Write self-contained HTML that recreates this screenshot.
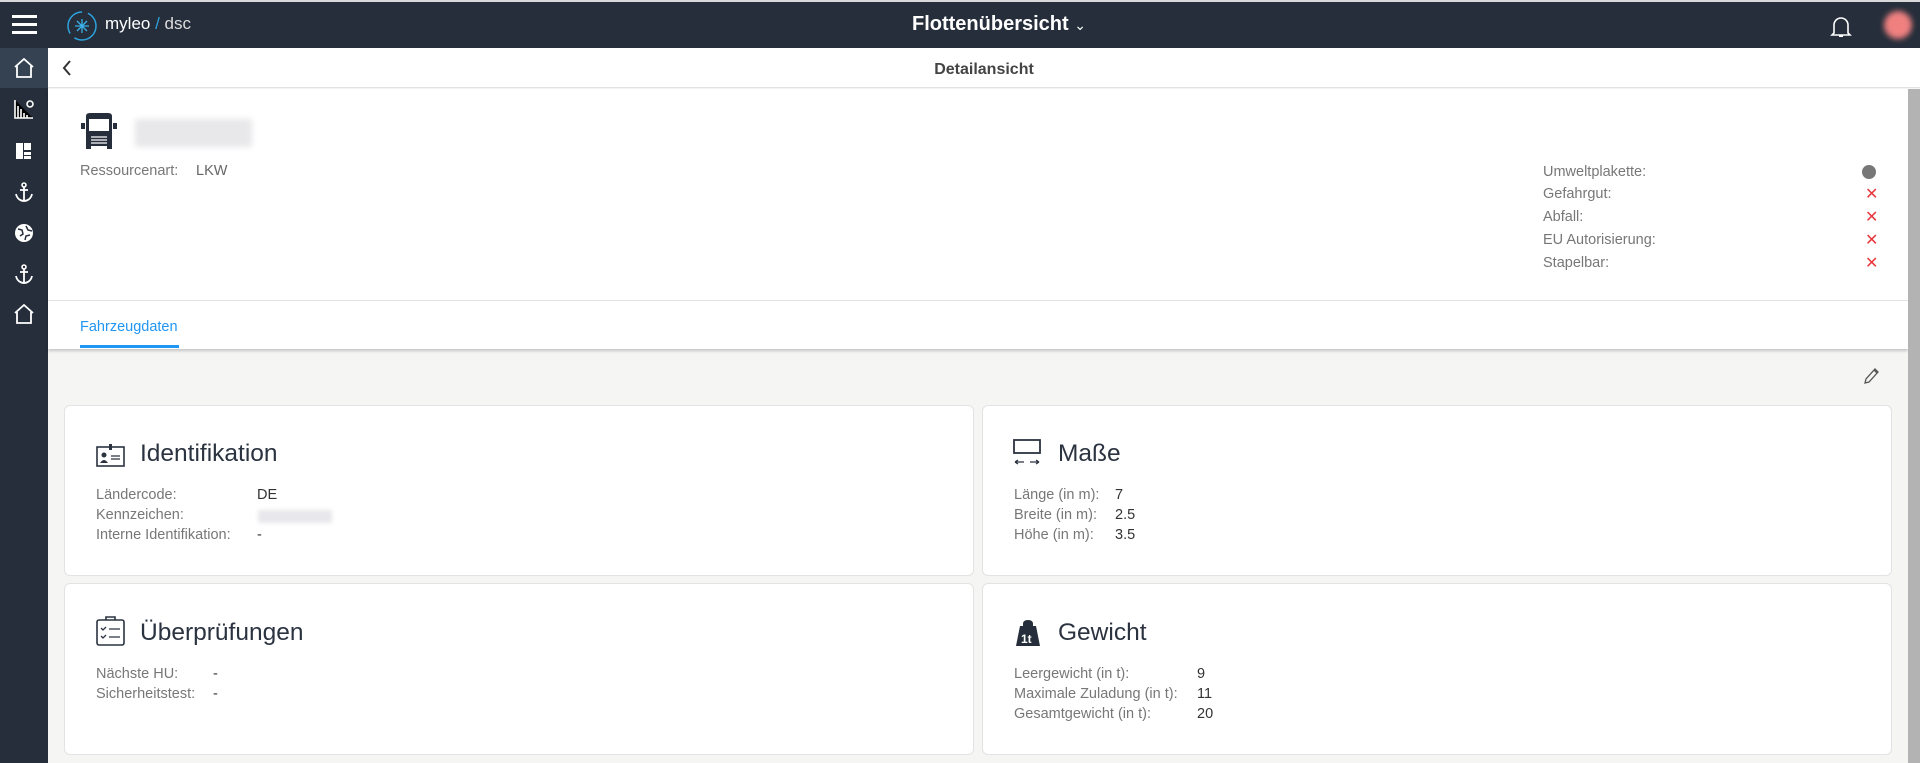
<!DOCTYPE html>
<html><head><meta charset="utf-8"><style>
*{box-sizing:border-box;margin:0;padding:0}
body{width:1920px;height:763px;overflow:hidden;background:#f5f5f4;font-family:"Liberation Sans","DejaVu Sans",sans-serif;position:relative;color:#333}
.top{position:absolute;left:0;top:0;width:1920px;height:48px;background:#252e3a;border-top:2px solid #d8d8d8}
.side{position:absolute;left:0;top:48px;width:48px;height:715px;background:#252e3a}
.side .act{position:absolute;left:0;top:0;width:48px;height:40px;background:#354252}
.side svg{position:absolute;left:13px}
.sub{position:absolute;left:48px;top:48px;width:1872px;height:40px;background:#fff;border-bottom:1px solid #e2e2e2}
.head{position:absolute;left:48px;top:89px;width:1860px;height:260px;background:#fff;box-shadow:0 2px 3px rgba(0,0,0,.2)}
.scroll{position:absolute;left:1908px;top:89px;width:12px;height:674px;background:#b3b3b3}
.t{position:absolute;font-size:14.5px;white-space:nowrap;margin-top:2px}
.l{color:#777}
.card{position:absolute;background:#fff;border:1px solid #e3e3e3;border-radius:6px}
.ct{position:absolute;font-size:24.5px;color:#2b3340;margin-top:1px}
.x{position:absolute;color:#e8383d;font-size:16px;left:1865px}
</style></head><body>
<div class="top">
 <div style="position:absolute;left:12px;top:13px;width:25px;height:3px;background:#fff;box-shadow:0 8px 0 #fff,0 16px 0 #fff"></div>
 <svg style="position:absolute;left:65px;top:7px" width="34" height="34" viewBox="0 0 34 34"><circle cx="17" cy="17" r="14" fill="none" stroke="#2ea3de" stroke-width="1.5" stroke-dasharray="30 6"/><path d="M10 17h14M17 10v14M12 12l10 10M22 12l-10 10" stroke="#3ab0e8" stroke-width="1.3"/></svg>
 <div class="t" style="left:105px;top:10px;font-size:17px;color:#fff">myleo <span style="color:#2ea3de">/</span><span style="color:#ddd"> dsc</span></div>
 <div class="t" style="left:912px;top:9px;font-size:20px;color:#fff;font-weight:bold">Flottenübersicht <span style="font-weight:normal;font-size:14px">&#8964;</span></div>
 <svg style="position:absolute;left:1830px;top:13px" width="22" height="24" viewBox="0 0 22 24"><path d="M4 18V10a7 7 0 0 1 14 0v8l2 2H2z" fill="none" stroke="#fff" stroke-width="1.6"/><path d="M9 21h4" stroke="#fff" stroke-width="2"/></svg>
 <div style="position:absolute;left:1884px;top:9px;width:28px;height:28px;border-radius:50%;background:#f08080;filter:blur(3px)"></div>
</div>
<div class="side">
 <div class="act"></div>
 <svg style="top:10px" width="22" height="20" viewBox="0 0 22 20"><path d="M2 9L11 1l9 8M4 8v11h14V8" fill="none" stroke="#fff" stroke-width="1.8"/></svg>
 <svg style="top:51px" width="22" height="20" viewBox="0 0 22 20"><path d="M2 1v18h18M5 19V7M8 19V10M11 19v-5M14 19v-3" stroke="#fff" stroke-width="1.6"/><circle cx="17" cy="5" r="3" fill="none" stroke="#fff" stroke-width="1.6"/></svg>
 <svg style="top:93px" width="22" height="20" viewBox="0 0 22 20"><path d="M3 2h7v16H3zM11 2h7v7h-7zM11 11h7v3h-7zM11 15h7v3h-7z" fill="#fff"/></svg>
 <svg style="top:133px" width="22" height="22" viewBox="0 0 22 22"><circle cx="11" cy="4" r="2" fill="none" stroke="#fff" stroke-width="1.6"/><path d="M11 6v14M7 9h8M3 13c1 5 5 7 8 7s7-2 8-7" fill="none" stroke="#fff" stroke-width="1.8"/></svg>
 <svg style="top:174px" width="22" height="22" viewBox="0 0 22 22"><circle cx="11" cy="11" r="9" fill="#fff"/><path d="M5 7l4 1 1 4-3 2M13 4l2 4 4 1M12 18l1-4 4-1" stroke="#252e3a" stroke-width="1.5" fill="none"/></svg>
 <svg style="top:215px" width="22" height="22" viewBox="0 0 22 22"><circle cx="11" cy="4" r="2" fill="none" stroke="#fff" stroke-width="1.6"/><path d="M11 6v14M7 9h8M3 13c1 5 5 7 8 7s7-2 8-7" fill="none" stroke="#fff" stroke-width="1.8"/></svg>
 <svg style="top:256px" width="22" height="20" viewBox="0 0 22 20"><path d="M2 9L11 1l9 8M4 8v11h14V8" fill="none" stroke="#fff" stroke-width="1.8"/></svg>
</div>
<div class="sub">
 <svg style="position:absolute;left:14px;top:12px" width="10" height="16" viewBox="0 0 10 16"><path d="M8 1L2 8l6 7" fill="none" stroke="#333" stroke-width="2"/></svg>
 <div class="t" style="left:0;width:1872px;text-align:center;top:11px;font-size:16px;color:#444;font-weight:bold">Detailansicht</div>
</div>
<div class="head">
 <svg style="position:absolute;left:32px;top:23px" width="38" height="40" viewBox="0 0 38 40"><path d="M6 4q0-3 4-3h18q4 0 4 3v33h-5v-3H11v3H6z" fill="#252e3a"/><rect x="9" y="7" width="20" height="12" fill="#fff"/><path d="M11 25h16M11 28h16M11 31h16" stroke="#fff" stroke-width="1.2"/><rect x="1" y="11" width="4" height="6" fill="#252e3a"/><rect x="33" y="11" width="4" height="6" fill="#252e3a"/></svg>
 <div style="position:absolute;left:87px;top:30px;width:117px;height:28px;background:#e8e8ea;filter:blur(3px)"></div>
 <div class="t l" style="left:32px;top:72px">Ressourcenart:</div>
 <div class="t" style="left:148px;top:72px;color:#666">LKW</div>
 <div class="t l" style="left:1495px;top:73px">Umweltplakette:</div>
 <div class="t l" style="left:1495px;top:95px">Gefahrgut:</div>
 <div class="t l" style="left:1495px;top:118px">Abfall:</div>
 <div class="t l" style="left:1495px;top:141px">EU Autorisierung:</div>
 <div class="t l" style="left:1495px;top:164px">Stapelbar:</div>
 <div style="position:absolute;left:1814px;top:76px;width:14px;height:14px;border-radius:50%;background:#777"></div>
 <div style="position:absolute;left:0;top:211px;width:1860px;height:1px;background:#e2e2e2"></div>
 <div class="t" style="left:32px;top:228px;color:#2196f3">Fahrzeugdaten</div>
 <div style="position:absolute;left:32px;top:256px;width:99px;height:3px;background:#2196f3"></div>
</div>
<div class="x" style="top:184px">✕</div>
<div class="x" style="top:207px">✕</div>
<div class="x" style="top:230px">✕</div>
<div class="x" style="top:253px">✕</div>
<div class="scroll"></div>
<svg style="position:absolute;left:1863px;top:367px" width="16" height="18" viewBox="0 0 16 18"><path d="M2 16l1-4 9-10 3 3-9 10z M11 3l3 3" fill="none" stroke="#555" stroke-width="1.3"/></svg>

<div class="card" style="left:64px;top:405px;width:910px;height:171px">
 <svg style="position:absolute;left:31px;top:37px" width="30" height="24" viewBox="0 0 30 24"><rect x="1" y="4" width="27" height="19" fill="none" stroke="#2b3340" stroke-width="1.6"/><rect x="13" y="1" width="3" height="6" fill="#2b3340"/><circle cx="8" cy="12" r="2.5" fill="#2b3340"/><path d="M4 20q4-6 8 0z" fill="#2b3340"/><path d="M15 13h9M15 16h9" stroke="#2b3340" stroke-width="1.3"/></svg>
 <div class="ct" style="left:75px;top:33px">Identifikation</div>
 <div class="t l" style="left:31px;top:79px">Ländercode:</div><div class="t" style="left:192px;top:79px">DE</div>
 <div class="t l" style="left:31px;top:99px">Kennzeichen:</div><div style="position:absolute;left:193px;top:104px;width:74px;height:13px;background:#e8e8ec;filter:blur(2px)"></div>
 <div class="t l" style="left:31px;top:119px">Interne Identifikation:</div><div class="t" style="left:192px;top:119px">-</div>
</div>
<div class="card" style="left:982px;top:405px;width:910px;height:171px">
 <svg style="position:absolute;left:30px;top:33px" width="30" height="28" viewBox="0 0 30 28"><rect x="1" y="1" width="26" height="13" fill="none" stroke="#2b3340" stroke-width="1.8"/><path d="M2 23h9M2 23l3-2M2 23l3 2M17 23h9M26 23l-3-2M26 23l-3 2" stroke="#2b3340" stroke-width="1.3" fill="none"/></svg>
 <div class="ct" style="left:75px;top:33px">Maße</div>
 <div class="t l" style="left:31px;top:79px">Länge (in m):</div><div class="t" style="left:132px;top:79px">7</div>
 <div class="t l" style="left:31px;top:99px">Breite (in m):</div><div class="t" style="left:132px;top:99px">2.5</div>
 <div class="t l" style="left:31px;top:119px">Höhe (in m):</div><div class="t" style="left:132px;top:119px">3.5</div>
</div>
<div class="card" style="left:64px;top:583px;width:910px;height:172px">
 <svg style="position:absolute;left:31px;top:32px" width="30" height="30" viewBox="0 0 30 30"><rect x="1" y="4" width="27" height="25" rx="2" fill="none" stroke="#2b3340" stroke-width="1.6"/><path d="M10 4V1h9v3" fill="none" stroke="#2b3340" stroke-width="1.6"/><path d="M5 12l2 2 3-3M5 20l2 2 3-3M13 13h11M13 21h11" stroke="#2b3340" stroke-width="1.3" fill="none"/></svg>
 <div class="ct" style="left:75px;top:34px">Überprüfungen</div>
 <div class="t l" style="left:31px;top:80px">Nächste HU:</div><div class="t" style="left:148px;top:80px">-</div>
 <div class="t l" style="left:31px;top:100px">Sicherheitstest:</div><div class="t" style="left:148px;top:100px">-</div>
</div>
<div class="card" style="left:982px;top:583px;width:910px;height:172px">
 <svg style="position:absolute;left:32px;top:35px" width="26" height="28" viewBox="0 0 26 28"><path d="M8 5q0-4 5-4t5 4v2h3l4 20H1L5 7h3z" fill="#252e3a"/><text x="6" y="24" font-size="12" font-weight="bold" fill="#fff" font-family="Liberation Sans">1t</text></svg>
 <div class="ct" style="left:75px;top:34px">Gewicht</div>
 <div class="t l" style="left:31px;top:80px">Leergewicht (in t):</div><div class="t" style="left:214px;top:80px">9</div>
 <div class="t l" style="left:31px;top:100px">Maximale Zuladung (in t):</div><div class="t" style="left:214px;top:100px">11</div>
 <div class="t l" style="left:31px;top:120px">Gesamtgewicht (in t):</div><div class="t" style="left:214px;top:120px">20</div>
</div>
</body></html>
